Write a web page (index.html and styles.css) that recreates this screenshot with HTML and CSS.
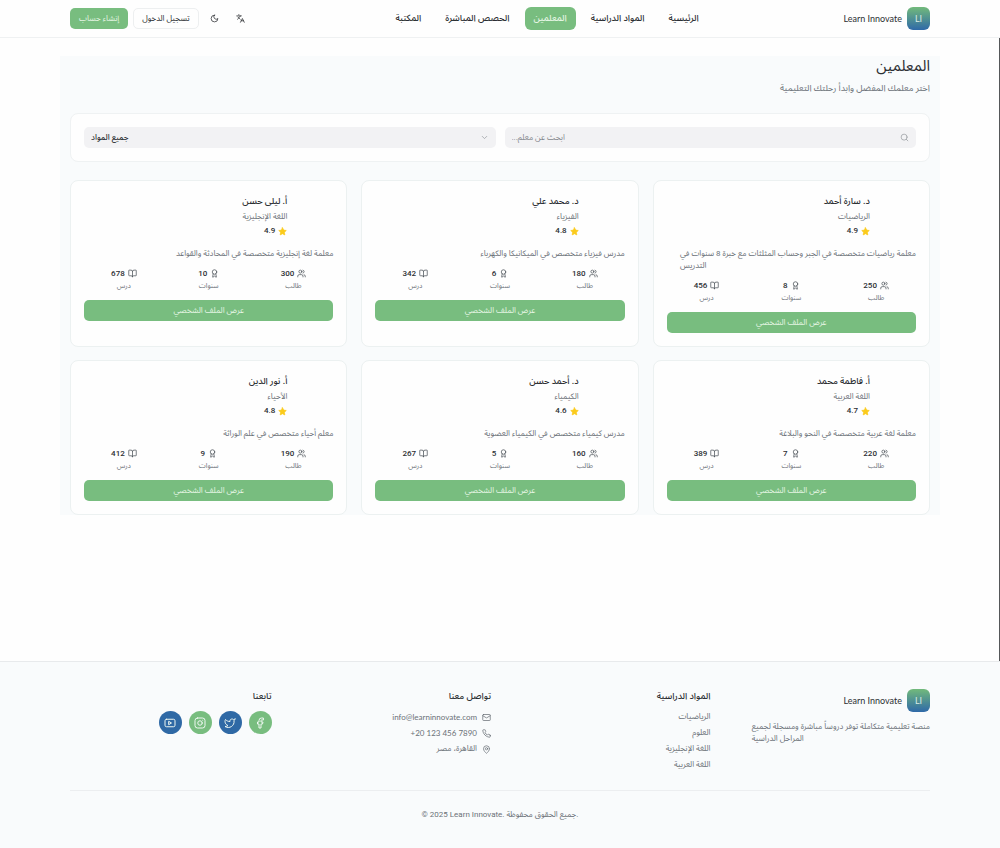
FILE: index.html
```
<!DOCTYPE html>
<html lang="ar" dir="rtl">
<head>
    <meta charset="UTF-8">
    <meta name="viewport" content="width=device-width, initial-scale=1.0">
    <title>المعلمين - Learn Innovate</title>
    <link rel="stylesheet" href="styles.css">
</head>
<body>
    <!-- Icons -->
    <svg class="sprite" aria-hidden="true">
        <symbol id="users" viewBox="0 0 24 24"><path d="M16 21v-2a4 4 0 0 0-4-4H6a4 4 0 0 0-4 4v2"/><circle cx="9" cy="7" r="4"/><path d="M22 21v-2a4 4 0 0 0-3-3.87M16 3.13a4 4 0 0 1 0 7.75"/></symbol>
        <symbol id="award" viewBox="0 0 24 24"><circle cx="12" cy="8" r="6"/><path d="m15.5 12.9 1.5 8.5a.5.5 0 0 1-.8.5l-3.6-2.7a1 1 0 0 0-1.2 0l-3.6 2.7a.5.5 0 0 1-.8-.5l1.5-8.5"/></symbol>
        <symbol id="book" viewBox="0 0 24 24"><path d="M12 7v14M3 18a1 1 0 0 1-1-1V4a1 1 0 0 1 1-1h5a4 4 0 0 1 4 4 4 4 0 0 1 4-4h5a1 1 0 0 1 1 1v13a1 1 0 0 1-1 1h-6a3 3 0 0 0-3 3 3 3 0 0 0-3-3z"/></symbol>
        <symbol id="star" viewBox="0 0 24 24"><path d="m12 2 3.1 6.3 6.9 1-5 4.9 1.2 6.9-6.2-3.3-6.2 3.3L7 14.2l-5-4.9 6.9-1z"/></symbol>
    </svg>

    <!-- Header -->
    <header>
        <div class="container header-row">
            <a class="logo" href="#"><span class="logo-mark">LI</span><span>Learn Innovate</span></a>
            <nav>
                <a href="#">الرئيسية</a>
                <a href="#">المواد الدراسية</a>
                <a href="#" class="active">المعلمين</a>
                <a href="#">الحصص المباشرة</a>
                <a href="#">المكتبة</a>
            </nav>
            <div class="actions">
                <button class="icon-btn" aria-label="اللغة"><svg class="icon" viewBox="0 0 24 24"><path d="m5 8 6 6M4 14l6-6 2-3M2 5h12M7 2h1M22 22l-5-10-5 10M14 18h6"/></svg></button>
                <button class="icon-btn" aria-label="الوضع الليلي"><svg class="icon" viewBox="0 0 24 24"><path d="M12 3a6 6 0 0 0 9 9 9 9 0 1 1-9-9Z"/></svg></button>
                <button class="btn btn-outline">تسجيل الدخول</button>
                <button class="btn btn-signup">إنشاء حساب</button>
            </div>
        </div>
    </header>

    <!-- Main Content -->
    <main>
        <div class="page">
            <h1>المعلمين</h1>
            <p class="subtitle">اختر معلمك المفضل وابدأ رحلتك التعليمية</p>

            <!-- Search and filter -->
            <form class="filters">
                <div class="field">
                    <input type="text" placeholder="ابحث عن معلم..." aria-label="ابحث عن معلم">
                    <svg class="icon search-icon" viewBox="0 0 24 24"><circle cx="11" cy="11" r="8"/><path d="m21 21-4.3-4.3"/></svg>
                </div>
                <div class="field">
                    <select aria-label="المادة">
                        <option>جميع المواد</option>
                        <option>الرياضيات</option>
                        <option>الفيزياء</option>
                    </select>
                    <svg class="icon chevron" viewBox="0 0 24 24"><path d="m6 9 6 6 6-6"/></svg>
                </div>
            </form>

            <!-- Teachers -->
            <div class="teachers">
                <article class="card">
                    <div class="info">
                        <h2>د. سارة أحمد</h2>
                        <p class="subject">الرياضيات</p>
                        <p class="rating"><svg class="icon star"><use href="#star"/></svg>4.9</p>
                    </div>
                    <p class="bio">معلمة رياضيات متخصصة في الجبر وحساب المثلثات مع خبرة 8 سنوات في<br>التدريس</p>
                    <div class="stats">
                        <div><b><svg class="icon"><use href="#users"/></svg>250</b><span>طالب</span></div>
                        <div><b><svg class="icon"><use href="#award"/></svg>8</b><span>سنوات</span></div>
                        <div><b><svg class="icon"><use href="#book"/></svg>456</b><span>درس</span></div>
                    </div>
                    <button class="btn profile">عرض الملف الشخصي</button>
                </article>

                <article class="card">
                    <div class="info">
                        <h2>د. محمد علي</h2>
                        <p class="subject">الفيزياء</p>
                        <p class="rating"><svg class="icon star"><use href="#star"/></svg>4.8</p>
                    </div>
                    <p class="bio">مدرس فيزياء متخصص في الميكانيكا والكهرباء</p>
                    <div class="stats">
                        <div><b><svg class="icon"><use href="#users"/></svg>180</b><span>طالب</span></div>
                        <div><b><svg class="icon"><use href="#award"/></svg>6</b><span>سنوات</span></div>
                        <div><b><svg class="icon"><use href="#book"/></svg>342</b><span>درس</span></div>
                    </div>
                    <button class="btn profile">عرض الملف الشخصي</button>
                </article>

                <article class="card">
                    <div class="info">
                        <h2>أ. ليلى حسن</h2>
                        <p class="subject">اللغة الإنجليزية</p>
                        <p class="rating"><svg class="icon star"><use href="#star"/></svg>4.9</p>
                    </div>
                    <p class="bio">معلمة لغة إنجليزية متخصصة في المحادثة والقواعد</p>
                    <div class="stats">
                        <div><b><svg class="icon"><use href="#users"/></svg>300</b><span>طالب</span></div>
                        <div><b><svg class="icon"><use href="#award"/></svg>10</b><span>سنوات</span></div>
                        <div><b><svg class="icon"><use href="#book"/></svg>678</b><span>درس</span></div>
                    </div>
                    <button class="btn profile">عرض الملف الشخصي</button>
                </article>

                <article class="card">
                    <div class="info">
                        <h2>أ. فاطمة محمد</h2>
                        <p class="subject">اللغة العربية</p>
                        <p class="rating"><svg class="icon star"><use href="#star"/></svg>4.7</p>
                    </div>
                    <p class="bio">معلمة لغة عربية متخصصة في النحو والبلاغة</p>
                    <div class="stats">
                        <div><b><svg class="icon"><use href="#users"/></svg>220</b><span>طالب</span></div>
                        <div><b><svg class="icon"><use href="#award"/></svg>7</b><span>سنوات</span></div>
                        <div><b><svg class="icon"><use href="#book"/></svg>389</b><span>درس</span></div>
                    </div>
                    <button class="btn profile">عرض الملف الشخصي</button>
                </article>

                <article class="card">
                    <div class="info">
                        <h2>د. أحمد حسن</h2>
                        <p class="subject">الكيمياء</p>
                        <p class="rating"><svg class="icon star"><use href="#star"/></svg>4.6</p>
                    </div>
                    <p class="bio">مدرس كيمياء متخصص في الكيمياء العضوية</p>
                    <div class="stats">
                        <div><b><svg class="icon"><use href="#users"/></svg>160</b><span>طالب</span></div>
                        <div><b><svg class="icon"><use href="#award"/></svg>5</b><span>سنوات</span></div>
                        <div><b><svg class="icon"><use href="#book"/></svg>267</b><span>درس</span></div>
                    </div>
                    <button class="btn profile">عرض الملف الشخصي</button>
                </article>

                <article class="card">
                    <div class="info">
                        <h2>أ. نور الدين</h2>
                        <p class="subject">الأحياء</p>
                        <p class="rating"><svg class="icon star"><use href="#star"/></svg>4.8</p>
                    </div>
                    <p class="bio">معلم أحياء متخصص في علم الوراثة</p>
                    <div class="stats">
                        <div><b><svg class="icon"><use href="#users"/></svg>190</b><span>طالب</span></div>
                        <div><b><svg class="icon"><use href="#award"/></svg>9</b><span>سنوات</span></div>
                        <div><b><svg class="icon"><use href="#book"/></svg>412</b><span>درس</span></div>
                    </div>
                    <button class="btn profile">عرض الملف الشخصي</button>
                </article>
            </div>
        </div>
    </main>

    <!-- Footer -->
    <footer>
        <div class="container">
            <div class="footer-grid">
                <div>
                    <a class="logo" href="#"><span class="logo-mark">LI</span><span>Learn Innovate</span></a>
                    <p class="about">منصة تعليمية متكاملة توفر دروساً مباشرة ومسجلة لجميع<br>المراحل الدراسية</p>
                </div>
                <div>
                    <h3>المواد الدراسية</h3>
                    <ul>
                        <li><a href="#">الرياضيات</a></li>
                        <li><a href="#">العلوم</a></li>
                        <li><a href="#">اللغة الإنجليزية</a></li>
                        <li><a href="#">اللغة العربية</a></li>
                    </ul>
                </div>
                <div>
                    <h3>تواصل معنا</h3>
                    <ul class="contact">
                        <li><svg class="icon" viewBox="0 0 24 24"><rect x="2" y="4" width="20" height="16" rx="2"/><path d="m22 7-9 5.7a2 2 0 0 1-2 0L2 7"/></svg><span class="latin" dir="ltr">info@learninnovate.com</span></li>
                        <li><svg class="icon" viewBox="0 0 24 24"><path d="M22 16.9v3a2 2 0 0 1-2.2 2 19.8 19.8 0 0 1-8.6-3.1 19.5 19.5 0 0 1-6-6 19.8 19.8 0 0 1-3.1-8.6A2 2 0 0 1 4.1 2h3a2 2 0 0 1 2 1.7c.1 1 .4 1.9.7 2.8a2 2 0 0 1-.5 2.1L8.1 9.9a16 16 0 0 0 6 6l1.3-1.3a2 2 0 0 1 2.1-.4c.9.3 1.8.6 2.8.7a2 2 0 0 1 1.7 2z"/></svg><span class="latin" dir="ltr">+20 123 456 7890</span></li>
                        <li><svg class="icon" viewBox="0 0 24 24"><path d="M20 10c0 5-5.5 10.2-7.4 11.8a1 1 0 0 1-1.2 0C9.5 20.2 4 15 4 10a8 8 0 0 1 16 0"/><circle cx="12" cy="10" r="3"/></svg><span>القاهرة، مصر</span></li>
                    </ul>
                </div>
                <div>
                    <h3>تابعنا</h3>
                    <div class="social">
                        <a href="#" aria-label="Facebook"><svg class="icon" viewBox="0 0 24 24"><path d="M18 2h-3a5 5 0 0 0-5 5v3H7v4h3v8h4v-8h3l1-4h-4V7a1 1 0 0 1 1-1h3z"/></svg></a>
                        <a href="#" class="blue" aria-label="Twitter"><svg class="icon" viewBox="0 0 24 24"><path d="M22 4s-.7 2.1-2 3.4c1.6 10-9.4 17.3-18 11.6 2.2.1 4.4-.6 6-2C3 15.5.5 9.6 3 5c2.2 2.6 5.6 4.1 9 4-.9-4.2 4-6.6 7-3.8 1.1 0 3-1.2 3-1.2z"/></svg></a>
                        <a href="#" aria-label="Instagram"><svg class="icon" viewBox="0 0 24 24"><rect x="2" y="2" width="20" height="20" rx="5"/><circle cx="12" cy="12" r="4.5"/><path d="M17.5 6.5h.01"/></svg></a>
                        <a href="#" class="blue" aria-label="YouTube"><svg class="icon" viewBox="0 0 24 24"><rect x="2" y="4.5" width="20" height="15" rx="3"/><path d="m10 15 5-3-5-3z"/></svg></a>
                    </div>
                </div>
            </div>
            <p class="copyright" dir="ltr">© 2025 Learn Innovate. جميع الحقوق محفوظة.</p>
        </div>
    </footer>
</body>
</html>
```
FILE: styles.css
```
/* General Styles */
* {
    box-sizing: border-box;
}

body {
    margin: 0;
    min-height: 100vh;
    display: flex;
    flex-direction: column;
    font-family: Roboto, 'Noto Sans Arabic', 'DejaVu Sans', sans-serif;
    font-size: 8px;
    line-height: 12px;
    background-color: #fefefe;
    color: #2c2f33;
}

h1, h2, h3, p, ul {
    margin: 0;
    padding: 0;
    font-weight: normal;
}

a {
    color: inherit;
    text-decoration: none;
}

button, input, select {
    font: inherit;
    color: inherit;
    border: none;
}

button {
    cursor: pointer;
}

.sprite {
    display: none;
}

.icon {
    width: 9px;
    height: 9px;
    flex: none;
    fill: none;
    stroke: currentColor;
    stroke-width: 2;
    stroke-linecap: round;
    stroke-linejoin: round;
}

.container {
    width: 100%;
    max-width: 880px;
    margin: 0 auto;
    padding: 0 10px;
}

.logo,
.latin {
    font-family: Lato, sans-serif;
}

/* Header */
header {
    background-color: #fefefe;
    border-bottom: 1px solid #eff1f2;
}

.header-row {
    height: 37px;
    display: flex;
    justify-content: space-between;
    align-items: center;
}

.logo {
    display: flex;
    align-items: center;
    gap: 5px;
    font-size: 9px;
}

.logo-mark {
    width: 23px;
    height: 23px;
    border-radius: 6px;
    background: linear-gradient(#72ba7b, #2f69a8);
    color: #d8ebe6;
    text-align: center;
    line-height: 23px;
}

nav {
    display: flex;
    gap: 6px;
    font-size: 9px;
    font-weight: 500;
}

nav a {
    padding: 0 9px;
    line-height: 23px;
    border-radius: 6px;
}

nav .active {
    background-color: #78bd7f;
    color: #e4f5e3;
}

.actions {
    display: flex;
    align-items: center;
    gap: 5px;
}

.icon-btn {
    display: flex;
    align-items: center;
    justify-content: center;
    width: 21px;
    height: 21px;
    padding: 0;
    background: none;
}

.btn {
    height: 21px;
    padding: 0 9px;
    border-radius: 5px;
    background-color: #78bd7f;
    color: #e4f5e3;
    white-space: nowrap;
}

.btn-outline {
    padding: 0 8px;
    background-color: #fefefe;
    border: 1px solid #edeff0;
    color: #2c2f33;
}

/* Main Content */
main {
    flex: 1;
    padding-top: 18px;
    box-shadow: inset -1px 0 #555759;
}

.page {
    max-width: 880px;
    margin: 0 auto;
    padding: 0 10px;
    background-color: #f9fbfc;
}

h1 {
    font-size: 15px;
    line-height: 20px;
}

.subtitle {
    font-size: 9px;
    line-height: 14px;
    margin: 5px 0 18px;
    color: #6b7178;
}

.filters {
    display: grid;
    grid-template-columns: 1fr 1fr;
    gap: 9px;
    padding: 13px;
    background-color: #fefefe;
    border: 1px solid #eff2f3;
    border-radius: 8px;
}

.field {
    position: relative;
}

.field input,
.field select {
    display: block;
    width: 100%;
    height: 21px;
    padding: 0 7px;
    border-radius: 5px;
    background-color: #f2f2f4;
    text-align: left;
    text-align-last: left;
    appearance: none;
}

.field select {
    font-weight: 500;
}

.field input::placeholder {
    color: #85888e;
}

.search-icon,
.chevron {
    position: absolute;
    top: 6px;
    right: 7px;
    color: #9a9da2;
}

/* Teacher cards */
.teachers {
    display: grid;
    grid-template-columns: repeat(3, 1fr);
    gap: 13px 14px;
    margin-top: 18px;
}

.card {
    padding: 13px;
    background-color: #fefefe;
    border: 1px solid #ecf1f1;
    border-radius: 8px;
}

.info {
    padding-right: 46px;
}

.info h2 {
    font-size: 9px;
    font-weight: 500;
    line-height: 14px;
}

.subject {
    margin: 3px 0 2px;
    color: #6b7178;
}

.rating {
    display: flex;
    align-items: center;
    gap: 3px;
    font-weight: 500;
}

.star {
    fill: #fbcb1c;
    stroke: #fbcb1c;
}

.bio {
    width: fit-content;
    margin-top: 11px;
    color: #6b7178;
    text-align: left;
    white-space: nowrap;
}

.stats {
    display: grid;
    grid-template-columns: repeat(3, 1fr);
    gap: 5px;
    margin: 7px 0 9px;
    text-align: center;
}

.stats b {
    display: flex;
    align-items: center;
    justify-content: center;
    gap: 3px;
    font-weight: 500;
    line-height: 13px;
}

.stats .icon {
    color: #4d545b;
}

.stats span {
    display: block;
    margin-top: 1px;
    font-size: 7px;
    line-height: 10px;
    color: #6b7178;
}

.profile {
    display: block;
    width: 100%;
}

/* Footer */
footer {
    background-color: #f9fbfc;
    border-top: 1px solid #e8eaec;
    color: #6b7178;
}

.footer-grid {
    display: grid;
    grid-template-columns: repeat(4, 1fr);
    gap: 18px;
    padding: 27px 0 15px;
    border-bottom: 1px solid #eceef0;
}

footer .logo,
h3 {
    color: #2c2f33;
}

.about {
    width: fit-content;
    margin-top: 9px;
    text-align: left;
    white-space: nowrap;
}

h3 {
    font-size: 9px;
    font-weight: 500;
    line-height: 14px;
    margin-bottom: 8px;
}

ul {
    list-style: none;
}

ul li {
    height: 12px;
    margin-bottom: 4px;
}

.contact li {
    display: flex;
    align-items: center;
    gap: 5px;
}

.social {
    display: flex;
    gap: 7px;
}

.social a {
    display: flex;
    align-items: center;
    justify-content: center;
    width: 23px;
    height: 23px;
    border-radius: 50%;
    background-color: #78bd7f;
    color: #eff8f2;
}

.social .blue {
    background-color: #2f69a5;
}

.social .icon {
    width: 12px;
    height: 12px;
}

.copyright {
    padding: 18px 0 27px;
    text-align: center;
}
```
